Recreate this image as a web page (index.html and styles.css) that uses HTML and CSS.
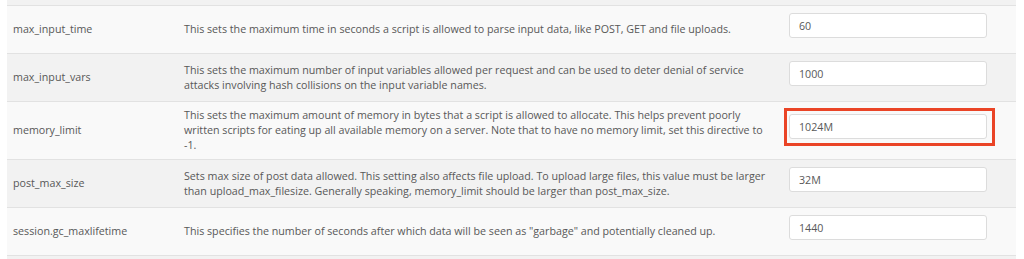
FILE: index.html
```html
<!DOCTYPE html>
<html lang="en">
<head>
    <meta charset="UTF-8">
    <meta name="viewport" content="width=device-width, initial-scale=1.0">
    <title>php options</title>
    <link rel="stylesheet" href="styles.css">
</head>
<body>
<div class="settings">
    <div class="stub odd"></div>
    <table class="directives">
        <colgroup>
            <col class="col-name">
            <col class="col-desc">
            <col class="col-value">
        </colgroup>
        <tr class="even">
            <td class="name">max_input_time</td>
            <td class="desc">This sets the maximum time in seconds a script is allowed to parse input data, like POST, GET and file uploads.</td>
            <td class="value"><input type="text" value="60"></td>
        </tr>
        <tr class="odd">
            <td class="name">max_input_vars</td>
            <td class="desc">This sets the maximum number of input variables allowed per request and can be used to deter denial of service attacks involving hash collisions on the input variable names.</td>
            <td class="value"><input type="text" value="1000"></td>
        </tr>
        <tr class="even">
            <td class="name">memory_limit</td>
            <td class="desc">This sets the maximum amount of memory in bytes that a script is allowed to allocate. This helps prevent poorly written scripts for eating up all available memory on a server. Note that to have no memory limit, set this directive to -1.</td>
            <td class="value marked"><span class="highlight"><input type="text" value="1024M"></span></td>
        </tr>
        <tr class="odd">
            <td class="name">post_max_size</td>
            <td class="desc">Sets max size of post data allowed. This setting also affects file upload. To upload large files, this value must be larger than upload_max_filesize. Generally speaking, memory_limit should be larger than post_max_size.</td>
            <td class="value"><input type="text" value="32M"></td>
        </tr>
        <tr class="even">
            <td class="name">session.gc_maxlifetime</td>
            <td class="desc">This specifies the number of seconds after which data will be seen as "garbage" and potentially cleaned up.</td>
            <td class="value"><input type="text" value="1440"></td>
        </tr>
    </table>
    <div class="stub odd"></div>
</div>
</body>
</html>
```

FILE: styles.css
```css
/* page styles */

body {
    margin: 0;
    padding: 0 8px 0 7px;
    background-color: #ffffff;
    font-family: 'Open Sans', 'Noto Sans', Arial, sans-serif;
    font-size: 10.7px;
    color: #585858;
}
.settings {
    width: 1009px;
}
.stub {
    height: 5px;
}
.odd {
    background-color: #f2f2f2;
}
.even {
    background-color: #f9f9f9;
}
table.directives {
    width: 100%;
    table-layout: fixed;
    border-collapse: collapse;
    border-top: 1px solid #e2e2e2;
}
col.col-name {
    width: 170px;
}
col.col-desc {
    width: 606px;
}
col.col-value {
    width: 233px;
}
td {
    border-bottom: 1px solid #e2e2e2;
    line-height: 15px;
}
td.name {
    padding: 6px 6px;
    vertical-align: middle;
}
td.desc {
    padding: 6px 6px 6px 7px;
    vertical-align: middle;
}
td.value {
    padding: 7px 6px 15px 6px;
    vertical-align: top;
}
td.value.marked {
    padding-top: 12px;
}
td.value input {
    display: block;
    box-sizing: border-box;
    width: 198px;
    height: 25px;
    margin: 0;
    padding: 0 9px;
    border: 1px solid #dcdcdc;
    border-radius: 3px;
    background-color: #ffffff;
    font-family: 'Open Sans', 'Noto Sans', Arial, sans-serif;
    font-size: 10.7px;
    color: #585858;
}
.highlight {
    position: relative;
    display: block;
    width: 198px;
}
.highlight::after {
    content: "";
    position: absolute;
    left: -5px;
    top: -6px;
    right: -8px;
    bottom: -7px;
    border: 3px solid #ea4426;
    pointer-events: none;
}
```
